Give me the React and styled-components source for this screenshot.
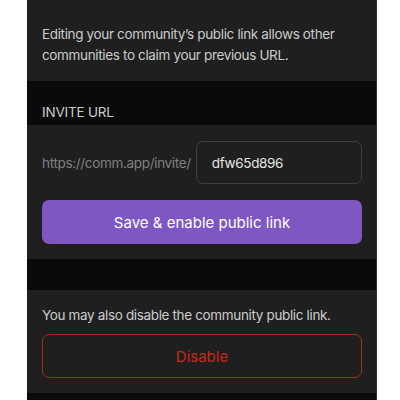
import React from 'react'
import styled, { createGlobalStyle } from 'styled-components'

const GlobalStyle = createGlobalStyle`
  html, body {
    margin: 0;
    padding: 0;
    background: #ffffff;
  }
  body {
    font-family: Inter, "Noto Sans", sans-serif;
    -webkit-font-smoothing: antialiased;
  }
`

const Screen = styled.div`
  width: 350px;
  height: 400px;
  margin-left: 27px;
  background: #0a0a0a;
  border-right: 1px solid #2e2e2e;
  box-sizing: border-box;
  display: flex;
  flex-direction: column;
  overflow: hidden;
`

const Panel = styled.section`
  background: #1f1f1f;
  padding: ${(p) => p.$pad || '16px 14px 15px 15px'};
  display: flex;
  flex-direction: column;
  gap: ${(p) => p.$gap || '0px'};
`

const Spacer = styled.div`
  height: ${(p) => p.$h}px;
  flex-shrink: 0;
`

const Body = styled.p`
  margin: 0;
  color: #cccccc;
  font-size: 13.5px;
  letter-spacing: -0.35px;
  line-height: 21px;
`

const Label = styled.div`
  padding: 22px 15px 4px;
  color: #cccccc;
  font-size: 13.5px;
  letter-spacing: -0.2px;
  line-height: 18px;
  text-transform: uppercase;
`

const InputRow = styled.div`
  display: flex;
  align-items: center;
  gap: 5px;
`

const Prefix = styled.span`
  color: #808080;
  font-size: 13.5px;
  letter-spacing: -0.33px;
  white-space: nowrap;
`

const Field = styled.div`
  flex: 1;
  height: 43px;
  box-sizing: border-box;
  border: 1px solid #404040;
  border-radius: 7px;
  display: flex;
  align-items: center;
  padding-left: 15px;
  color: #e6e6e6;
  font-size: 13.5px;
  letter-spacing: -0.35px;
`

const Button = styled.button`
  height: 44px;
  border-radius: 7px;
  font-family: inherit;
  font-size: 15px;
  cursor: pointer;
  background: ${(p) => (p.$danger ? 'transparent' : '#7e57c2')};
  color: ${(p) => (p.$danger ? '#c42a14' : '#ffffff')};
  border: ${(p) => (p.$danger ? '1px solid #a02c1c' : 'none')};
`

export default function App() {
  return (
    <>
      <GlobalStyle />
      <Screen>
        <Panel $pad="24px 14px 15px 15px">
          <Body>
            Editing your community’s public link allows other communities to
            claim your previous URL.
          </Body>
        </Panel>
        <Label>Invite URL</Label>
        <Panel $gap="16px">
          <InputRow>
            <Prefix>https://comm.app/invite/</Prefix>
            <Field>dfw65d896</Field>
          </InputRow>
          <Button>Save &amp; enable public link</Button>
        </Panel>
        <Spacer $h={31} />
        <Panel $pad="15px 14px 15px 15px" $gap="8px">
          <Body>You may also disable the community public link.</Body>
          <Button $danger>Disable</Button>
        </Panel>
      </Screen>
    </>
  )
}
